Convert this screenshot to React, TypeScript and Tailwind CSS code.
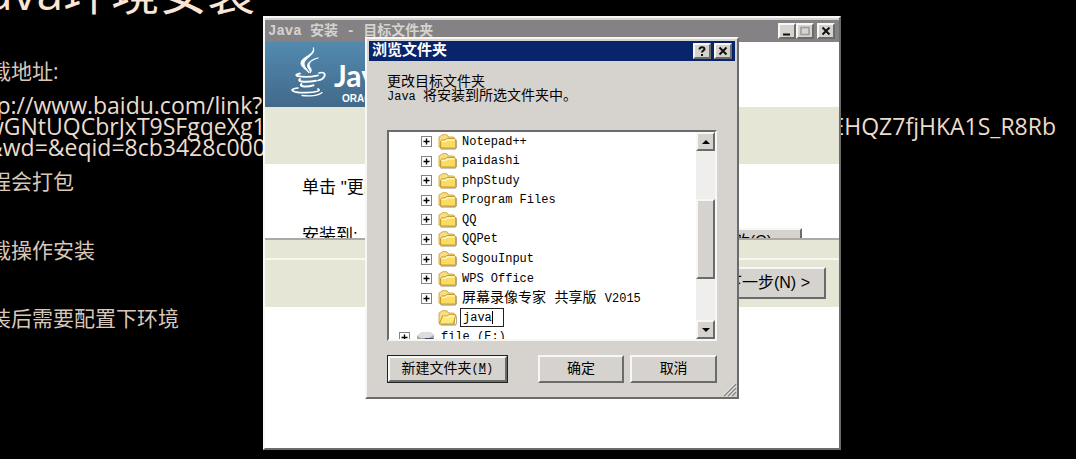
import { ReactNode } from "react";
import clsx from "clsx";

const folders = [
  "Notepad++",
  "paidashi",
  "phpStudy",
  "Program Files",
  "QQ",
  "QQPet",
  "SogouInput",
  "WPS Office",
];

const raised =
  "bg-[#d6d3ce] border-2 border-t-[#f7f7f5] border-l-[#f7f7f5] border-r-[#6b6b6b] border-b-[#6b6b6b]";

function CaptionButton({ label, children }: { label: string; children: ReactNode }) {
  return (
    <button aria-label={label} className={clsx("flex h-4 w-[18px] items-center justify-center", raised)}>
      <svg viewBox="0 0 12 10" className="h-[10px] w-3 shrink-0" fill="none" stroke="#111" strokeWidth="2">
        {children}
      </svg>
    </button>
  );
}

function Folder({ open = false }: { open?: boolean }) {
  return (
    <svg viewBox="0 0 19 16" className="h-4 w-[19px] shrink-0">
      <path d="M2 14.5h15l1-1V5.5l.7 1V14l-1.4 1.5H3z" fill="#6b5a30" opacity=".7" />
      <path d="M1 13V3.2L2.2 2H3l1.3-1.3h4.5L10 2.2V3h5.6L16.6 4v9.6H2z" fill="#f7de84" stroke="#c79a2c" strokeWidth=".8" />
      {open ? (
        <path d="M1.3 14 4.6 6h5l1.2-1.2h7L15.4 14z" fill="#ffe873" stroke="#c08d18" strokeWidth=".9" />
      ) : (
        <path d="M2.6 14V7.2L3.8 6h3.4l1.4-1.4h8l1.1 1.1v7.5l-.9.9z" fill="#fbdc62" stroke="#c08d18" strokeWidth=".9" />
      )}
      <path d={open ? "M5.3 7h4.8l1.2-1.2h5.2" : "M3.6 7.4h4L9 5.8h7.5"} fill="none" stroke="#fffbd0" strokeWidth="1.2" />
    </svg>
  );
}

function Expander() {
  return (
    <svg viewBox="0 0 11 11" className="size-[11px] shrink-0">
      <rect x=".5" y=".5" width="10" height="10" fill="#fff" stroke="#848284" />
      <path d="M2.5 5.5h6M5.5 2.5v6" stroke="#000" strokeWidth="1.4" />
    </svg>
  );
}

function JavaCup() {
  return (
    <svg viewBox="0 0 36 50" className="h-[50px] w-9 shrink-0" fill="none" stroke="#fff" strokeLinecap="round">
      <path d="M22.5 1c3 7-10 10-9.500 16 .3 3.500 3.500 5 5 9-2.500-3.500-8-5.500-8-10C10 10 24 8 22.500 1z" fill="#fff" strokeWidth="1" />
      <path d="M27 11c-5 1.500-9.500 4-8.500 8 .5 2 3.500 3.500.5 7 1-3-2.500-4-2.500-7 0-4 5-7 10.500-8z" fill="#fff" strokeWidth=".8" />
      <path d="M9 26.500c-4 .8-5 2-2 2.600 5 1 14 .6 20-.8" strokeWidth="1.800" />
      <path d="M28 26c5-1.500 7 1 5 4-1 1.800-3.500 3-6 3.500" strokeWidth="1.700" />
      <path d="M9 32c-2 1.500 0 2.500 4 2.700 4 .2 8-.2 12-1" strokeWidth="2" />
      <path d="M10.500 37c-1.500 1.500 0 2.300 3 2.500 3.500.2 6-.2 9-1.200" strokeWidth="2" />
      <path d="M7 41c-6 .5-8 2.500-3 3.800 6 1.400 17 1.200 22.500-.6 2-.8 2-1.500.5-2.200" strokeWidth="1.700" />
      <path d="M11 48.500c7 1 17 .2 20-3" strokeWidth="1.300" />
    </svg>
  );
}

function Slide() {
  return (
    <article className="overflow-hidden whitespace-nowrap font-['Open_Sans','Noto_Sans_CJK_SC',sans-serif] text-[21px] leading-[21px] text-[#d9c8b9]">
      <h1 className="-mt-9 -ml-[27px] text-[48px] leading-[56px] text-[#fbe6d6]">Java环境安装</h1>
      <div className="-ml-[10px] pt-[41px]">
        <p>载地址:</p>
        <div className="-ml-1 pt-[13px] text-[23px] text-[#ecdccd]">
          <p className="-ml-5">http://www.baidu.com/link?</p>
          <p className="flex justify-between pr-5">
            <span>wGNtUQCbrJxT9SFgqeXg1</span>
            <span>EHQZ7fjHKA1S_R8Rb</span>
          </p>
          <p>&amp;wd=&amp;eqid=8cb3428c000</p>
        </div>
        <p className="mt-[13px]">程会打包</p>
        <p className="mt-12">载操作安装</p>
        <p className="mt-[47px]">装后需要配置下环境</p>
      </div>
    </article>
  );
}

function InstallerWindow() {
  return (
    <section
      className={clsx(
        "absolute top-4 left-[263px] w-[578px] font-['Liberation_Sans','Noto_Sans_CJK_SC',sans-serif] text-[17px] leading-5",
        raised
      )}
    >
      <header className="mt-0.5 flex h-[22px] items-center bg-[#848284] pr-1 pl-[3px] text-[#d6d3ce]">
        <h2 className="flex-1 font-['Liberation_Mono','Noto_Sans_CJK_SC',monospace] text-sm font-bold">
          Java 安装 - 目标文件夹
        </h2>
        <CaptionButton label="最小化">
          <path d="M2 8.500h7" />
        </CaptionButton>
        <CaptionButton label="最大化">
          <path d="M2 1.500h8v7H2z" stroke="#9c9a98" strokeWidth="1.500" />
        </CaptionButton>
        <div className="w-[3px]" />
        <CaptionButton label="关闭">
          <path d="m2.500 1.500 7 7m0-7-7 7" />
        </CaptionButton>
      </header>
      <div className="bg-white">
        <div className="flex h-[65px]">
          <div className="flex w-48 bg-linear-to-b from-[#528aae] to-[#42698a] pt-[5px] pl-[26px] text-white">
            <JavaCup />
            <div className="pt-3 pl-[7px]">
              <p className="font-['Lato',sans-serif] text-[30px] leading-8 font-bold">Java</p>
              <p className="pt-0.5 pl-2 text-[10px] leading-3 font-bold">ORACLE</p>
            </div>
          </div>
        </div>
        <div className="h-[57px] bg-[#e6e6d6]" />
        <div className="flex h-[74px] items-start justify-between overflow-hidden pt-[14px] pr-[37px] pl-[37px]">
          <div>
            <p>单击 "更改"</p>
            <p className="mt-7">安装到:</p>
          </div>
          <button className={clsx("mt-[50px] h-7 w-[110px] shrink-0 pr-7 text-right text-base", raised)}>更改(C)</button>
        </div>
        <footer className="border-t-2 border-[#adaaa5] bg-[#e6e6d6]">
          <div className="h-5 border-b-2 border-[#f7f7ef]" />
          <div className="flex justify-end px-[13px] pt-[7px] pb-2">
            <button className={clsx("h-8 w-28 pr-[14px] text-right text-base", raised)}>下一步(N) &gt;</button>
          </div>
        </footer>
        <div className="h-[141px]" />
      </div>
    </section>
  );
}

function ScrollButton({ up = false }: { up?: boolean }) {
  return (
    <button aria-label={up ? "向上滚动" : "向下滚动"} className={clsx("flex h-[19px] items-center justify-center", raised)}>
      <svg viewBox="0 0 10 6" className="h-[6px] w-[10px]">
        <path d={up ? "M1 5h8L5 1z" : "M1 1h8L5 5z"} fill="#000" />
      </svg>
    </button>
  );
}

function FolderTree() {
  return (
    <div className="mx-[20px] flex h-[211px] border-2 border-t-[#6b6b6b] border-r-[#f7f7f5] border-b-[#f7f7f5] border-l-[#6b6b6b] bg-white">
      <div className="flex-1 overflow-hidden">
        <ul className="grid h-[215px] grid-rows-11 pl-8 text-xs">
          {folders.map((name) => (
            <li key={name} className="flex items-center">
              <Expander />
              <span className="w-[6px]" />
              <Folder />
              <span className="pl-[5px]">{name}</span>
            </li>
          ))}
          <li className="flex items-center">
            <Expander />
            <span className="w-[6px]" />
            <Folder />
            <span className="pl-[5px] text-sm leading-[14px]">
              屏幕录像专家 共享版 <span className="text-xs leading-[14px]">V2015</span>
            </span>
          </li>
          <li className="flex items-center pl-[17px]">
            <Folder open />
            <span className="relative ml-[3px] flex">
              <input
                aria-label="文件夹名"
                defaultValue="java"
                className="h-[19px] w-11 border border-[#222] bg-white pl-0.5 outline-none"
              />
              <span className="absolute top-[3px] left-8 h-[13px] w-px bg-black" />
            </span>
          </li>
          <li className="-ml-[22px] flex items-center">
            <Expander />
            <svg viewBox="0 0 19 14" className="ml-[6px] h-[14px] w-[19px]">
              <path d="M1 6 6 2h8l4 3v5l-4 3H6L1 10z" fill="#a5a5a5" />
              <path d="M1 6 6 2h8l4 3-5 3H5z" fill="#dedede" />
              <path d="M9 9h8" stroke="#4a4a63" strokeWidth="2" />
            </svg>
            <span className="pl-[6px]">file (E:)</span>
          </li>
        </ul>
      </div>
      <div className="flex w-[19px] flex-col bg-[#efeeec]">
        <ScrollButton up />
        <div className="h-12" />
        <div className={clsx("h-20", raised)} />
        <div className="flex-1" />
        <ScrollButton />
      </div>
    </div>
  );
}

function BrowseDialog() {
  return (
    <section
      role="dialog"
      aria-label="浏览文件夹"
      className={clsx(
        "absolute top-[37px] left-[365px] w-[374px] font-['Liberation_Mono','Noto_Sans_CJK_SC',monospace] text-sm leading-[14px] text-black",
        raised
      )}
    >
      <header className="m-0.5 flex h-5 items-center bg-[#08246b] pr-[3px] pl-[3px] text-white">
        <h2 className="flex-1 pt-0.5 text-[15px] leading-4 font-bold">浏览文件夹</h2>
        <CaptionButton label="帮助">
          <path d="M3.500 3.500C3.500.500 8.500.500 8.500 3c0 1.500-2.500 1.500-2.500 3.500M6 8v2" />
        </CaptionButton>
        <div className="w-[3px]" />
        <CaptionButton label="关闭">
          <path d="m2.500 1.500 7 7m0-7-7 7" />
        </CaptionButton>
      </header>
      <div className="h-[67px] px-5 pt-3">
        <p>更改目标文件夹</p>
        <p>
          <span className="text-xs leading-[14px]">Java </span>将安装到所选文件夹中。
        </p>
      </div>
      <FolderTree />
      <div className="flex px-5 pt-[14px]">
        <button className="h-7 w-[121px] border border-[#222]">
          <span className={clsx("flex h-full items-center justify-center", raised)}>
            新建文件夹<span className="text-xs">(<u>M</u>)</span>
          </span>
        </button>
        <button className={clsx("ml-[30px] h-7 w-[87px]", raised)}>确定</button>
        <button className={clsx("ml-[6px] h-7 w-[87px]", raised)}>取消</button>
      </div>
      <div className="flex h-[14px] justify-end">
        <svg viewBox="0 0 14 14" className="size-[14px]" stroke="#848284" strokeWidth="1.500">
          <path d="M1 13 13 1M5 13l8-8M9 13l4-4" />
          <path d="M0 12.500 12.500 0M4 12.500l8.500-8.500M8 12.500l4.500-4.500" stroke="#fff" strokeWidth=".7" />
        </svg>
      </div>
    </section>
  );
}

export default function App() {
  return (
    <main className="relative min-h-screen overflow-hidden bg-black">
      <Slide />
      <InstallerWindow />
      <BrowseDialog />
    </main>
  );
}
